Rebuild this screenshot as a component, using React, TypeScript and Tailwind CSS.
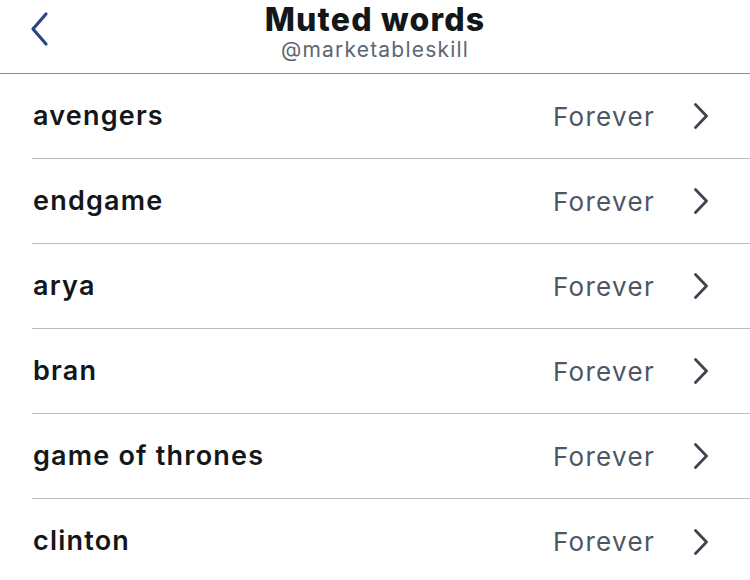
const words = ['avengers', 'endgame', 'arya', 'bran', 'game of thrones', 'clinton'];

export default function App() {
  return (
    <div
      className="w-[750px] h-[580px] bg-white overflow-hidden"
      style={{ fontFamily: 'Inter, "Noto Sans", sans-serif' }}
    >
      {/* Header */}
      <div className="relative h-[74px] border-b border-[#8d8d8d] flex flex-col items-center">
        <svg
          className="absolute left-[28px] top-[11px]"
          width="22"
          height="36"
          viewBox="0 0 22 36"
          fill="none"
        >
          <path d="M18 3 L5 18 L18 33" stroke="#2a4584" strokeWidth="3.2" strokeLinecap="round" strokeLinejoin="round" />
        </svg>
        <h1 className="text-[32px] leading-[39px] font-extrabold tracking-[1.2px] text-[#14171a]">Muted words</h1>
        <p className="text-[21px] leading-[22px] tracking-[1.2px] text-[#5b6775]">@marketableskill</p>
      </div>

      {/* List */}
      <div className="flex flex-col">
        {words.map((w, i) => (
          <div key={w} className="pl-[32px]">
            <div
              className={`h-[85px] flex items-center pr-[42px] ${
                i < words.length - 1 ? 'border-b border-[#b9bcc0]' : ''
              }`}
            >
              <span className="flex-1 pl-[1px] text-[27px] font-semibold tracking-[1.2px] text-[#14171a]">{w}</span>
              <span className="text-[26px] tracking-[1.3px] text-[#4c5664] mr-[39px]">Forever</span>
              <svg width="14" height="26" viewBox="0 0 14 26" fill="none">
                <path d="M1.5 1.5 L12.5 13 L1.5 24.5" stroke="#3d4550" strokeWidth="2.8" strokeLinecap="round" strokeLinejoin="round" />
              </svg>
            </div>
          </div>
        ))}
      </div>
    </div>
  );
}
